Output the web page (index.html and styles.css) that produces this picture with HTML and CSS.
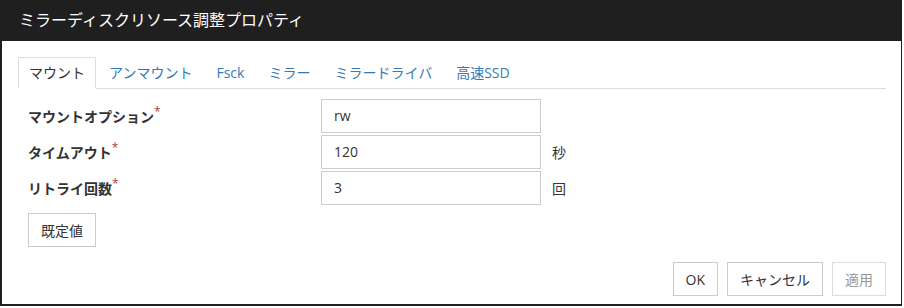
FILE: index.html
```html
<!DOCTYPE html>
<html lang="ja">
<head>
  <meta charset="UTF-8" />
  <title>ミラーディスクリソース調整プロパティ</title>
  <link rel="stylesheet" href="styles.css">
</head>
<body>

  <div class="dialog">
    <div class="dialog-header">ミラーディスクリソース調整プロパティ</div>

    <div class="dialog-body">
      <ul class="tabs">
        <li class="tab active">マウント</li>
        <li class="tab">アンマウント</li>
        <li class="tab">Fsck</li>
        <li class="tab">ミラー</li>
        <li class="tab">ミラードライバ</li>
        <li class="tab">高速SSD</li>
      </ul>

      <div class="form">
        <div class="form-row">
          <label class="form-label">マウントオプション<sup class="req">*</sup></label>
          <div class="form-input">rw</div>
        </div>
        <div class="form-row">
          <label class="form-label">タイムアウト<sup class="req">*</sup></label>
          <div class="form-input">120</div>
          <span class="unit">秒</span>
        </div>
        <div class="form-row">
          <label class="form-label">リトライ回数<sup class="req">*</sup></label>
          <div class="form-input">3</div>
          <span class="unit">回</span>
        </div>
        <button class="btn btn-default">既定値</button>
      </div>

      <div class="dialog-footer">
        <button class="btn">OK</button>
        <button class="btn">キャンセル</button>
        <button class="btn" disabled>適用</button>
      </div>
    </div>
  </div>

</body>
</html>
```

FILE: styles.css
```css
body {
  margin: 0;
  font-family: "Open Sans", "Noto Sans CJK JP", sans-serif;
  font-size: 14px;
  color: #333;
  background: #fff;
}

.dialog {
  width: 899px;
  height: 304px;
  border: 2px solid #1f1f1f;
  border-top: none;
  border-right-width: 1px;
  display: flex;
  flex-direction: column;
}

.dialog-header {
  height: 41px;
  line-height: 41px;
  padding-left: 17px;
  background: #1f1f1f;
  color: #fff;
  font-size: 16px;
}

.dialog-body {
  flex: 1;
  padding: 16px 15px 0 16px;
  display: flex;
  flex-direction: column;
}

.tabs {
  list-style: none;
  margin: 0;
  padding: 0;
  display: flex;
  border-bottom: 1px solid #ddd;
}

.tab {
  padding: 5px 10px;
  line-height: 20px;
  border: 1px solid transparent;
  border-bottom: none;
  margin-right: 2px;
  margin-bottom: -1px;
  color: #337ab7;
  cursor: pointer;
}

.tab.active {
  color: #333;
  background: #fff;
  border-color: #ddd;
  border-bottom: 1px solid #fff;
}

.form {
  padding: 10px 0 0 10px;
  display: flex;
  flex-direction: column;
  align-items: flex-start;
}

.form-row {
  display: flex;
  align-items: center;
  margin-bottom: 2px;
}

.form-label {
  width: 293px;
  font-weight: bold;
}

.req {
  color: #a94442;
  font-weight: normal;
  font-size: 12px;
  line-height: 0;
}

.form-input {
  box-sizing: border-box;
  width: 220px;
  height: 34px;
  line-height: 32px;
  padding: 0 12px;
  border: 1px solid #ccc;
}

.unit {
  margin-left: 11px;
}

.btn {
  font: inherit;
  color: #333;
  background: #fff;
  border: 1px solid #ccc;
  height: 34px;
  padding: 0 12px;
  cursor: pointer;
}

.btn[disabled] {
  color: #999;
  border-color: #ddd;
  cursor: default;
}

.btn-default {
  margin-top: 6px;
}

.dialog-footer {
  display: flex;
  justify-content: flex-end;
  gap: 9px;
  margin-top: 15px;
}
```
